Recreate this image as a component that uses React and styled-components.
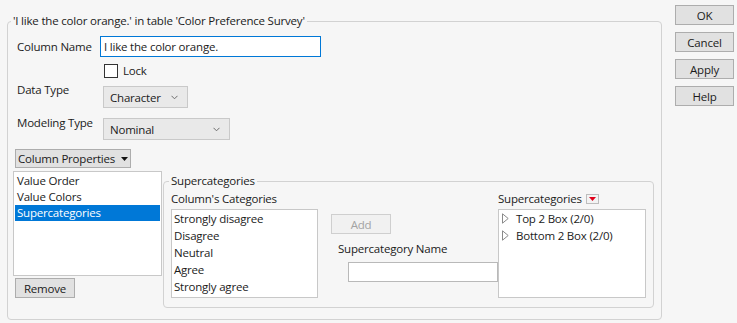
import React from "react";
import styled, { createGlobalStyle } from "styled-components";

const GlobalStyle = createGlobalStyle`
  html, body { margin: 0; padding: 0; background: #f6f6f6; }
  body {
    font-family: "Open Sans", "Noto Sans", "Liberation Sans", sans-serif;
    font-size: 11.5px;
    letter-spacing: -0.2px;
    color: #1b1b1b;
  }
  * { box-sizing: border-box; }
`;

const Window = styled.div`
  display: flex;
  align-items: flex-start;
  width: 737px;
  height: 323px;
  padding: 5px 0 0 7px;
  gap: 13px;
`;

const Group = styled.fieldset`
  margin: ${(p) => p.$top || 0}px 0 0 ${(p) => p.$left || 0}px;
  padding: ${(p) => p.$pad};
  width: ${(p) => p.$w}px;
  height: ${(p) => p.$h}px;
  border: 1px solid #d2d2d2;
  border-radius: 4px;
  min-width: 0;
`;

const Legend = styled.legend`
  margin-left: -2px;
  padding: 0 2px;
  line-height: 16px;
  height: 16px;
  white-space: nowrap;
`;

const Row = styled.div`
  display: flex;
  align-items: ${(p) => p.$align || "center"};
  margin-top: ${(p) => p.$mt || 0}px;
`;

const Label = styled.div`
  width: ${(p) => p.$w || 87}px;
  padding-left: 4px;
  line-height: 16px;
  white-space: nowrap;
  margin-top: ${(p) => p.$mt || 0}px;
`;

const TextInput = styled.div`
  width: ${(p) => p.$w}px;
  height: ${(p) => p.$h}px;
  margin-left: ${(p) => p.$ml || 0}px;
  margin-top: ${(p) => p.$mt || 0}px;
  background: #fff;
  border: 1px solid ${(p) => (p.$focus ? "#0078d7" : "#b9b9b9")};
  padding: 0 3px;
  display: flex;
  align-items: center;
  white-space: nowrap;
`;

const CheckBox = styled.span`
  width: 14px;
  height: 14px;
  margin-left: 91px;
  border: 1px solid #333;
  background: #fff;
`;

const CheckText = styled.span`
  margin-left: 5px;
  line-height: 16px;
`;

const Select = styled.div`
  width: ${(p) => p.$w}px;
  height: 22px;
  margin-left: 3px;
  background: #e9e9e9;
  border: 1px solid #c9c9c9;
  display: flex;
  align-items: center;
  justify-content: space-between;
  padding: 0 9px 0 6px;
`;

const Button = styled.div`
  width: ${(p) => p.$w}px;
  height: ${(p) => p.$h || 20}px;
  margin-left: ${(p) => p.$ml || 0}px;
  margin-top: ${(p) => p.$mt || 0}px;
  background: ${(p) => (p.$disabled ? "#f1f1f1" : "#e1e1e1")};
  border: 1px solid ${(p) => (p.$disabled ? "#cfcfcf" : "#adadad")};
  color: ${(p) => (p.$disabled ? "#a3a3a3" : "#1b1b1b")};
  display: flex;
  align-items: center;
  justify-content: ${(p) => (p.$menu ? "flex-start" : "center")};
  gap: 6px;
  padding-left: ${(p) => (p.$menu ? 2 : 0)}px;
  white-space: nowrap;
`;

const ButtonColumn = styled.div`
  display: flex;
  flex-direction: column;
  gap: 7px;
`;

const Bottom = styled.div`
  display: flex;
  align-items: flex-start;
  margin-top: 3px;
`;

const LeftCol = styled.div`
  display: flex;
  flex-direction: column;
`;

const ListBox = styled.div`
  width: ${(p) => p.$w}px;
  height: ${(p) => p.$h}px;
  margin-top: ${(p) => p.$mt || 0}px;
  background: #fff;
  border: 1px solid #c8c8c8;
  padding: ${(p) => p.$pad || "0"};
  display: flex;
  flex-direction: column;
`;

const ListItem = styled.div`
  height: ${(p) => p.$h}px;
  line-height: ${(p) => p.$h}px;
  padding-left: 2px;
  white-space: nowrap;
  background: ${(p) => (p.$sel ? "#0078d7" : "transparent")};
  color: ${(p) => (p.$sel ? "#fff" : "inherit")};
`;

const TreeItem = styled.div`
  height: 17px;
  display: flex;
  align-items: center;
  padding-left: 3px;
  gap: 7px;
  white-space: nowrap;
`;

const SubCols = styled.div`
  display: flex;
  align-items: flex-start;
  padding-top: 2px;
`;

const Col = styled.div`
  display: flex;
  flex-direction: column;
  width: ${(p) => p.$w}px;
`;

const ColLabel = styled.div`
  display: flex;
  align-items: center;
  line-height: 16px;
  height: 16px;
  white-space: nowrap;
  margin-left: ${(p) => p.$ml || 0}px;
  margin-top: ${(p) => p.$mt || 0}px;
`;

const MenuButton = styled.span`
  width: 13px;
  height: 10px;
  margin-left: 4px;
  background: #f3f3f3;
  border: 1px solid #bdbdbd;
  display: flex;
  align-items: center;
  justify-content: center;
`;

const Chevron = () => (
  <svg width="7" height="5" viewBox="0 0 7 5">
    <path d="M0.5 0.8 L3.5 3.8 L6.5 0.8" fill="none" stroke="#6d6d6d" strokeWidth="1" />
  </svg>
);

const Caret = ({ color }) => (
  <svg width="7" height="4" viewBox="0 0 7 4">
    <path d="M0 0 H7 L3.5 4 Z" fill={color} />
  </svg>
);

const TreeArrow = () => (
  <svg width="7" height="11" viewBox="0 0 7 11">
    <path d="M0.5 0.8 L6.2 5.5 L0.5 10.2 Z" fill="#fff" stroke="#8a8a8a" strokeWidth="1" />
  </svg>
);

const categories = ["Strongly disagree", "Disagree", "Neutral", "Agree", "Strongly agree"];
const properties = ["Value Order", "Value Colors", "Supercategories"];
const supers = ["Top 2 Box (2/0)", "Bottom 2 Box (2/0)"];

export default function App() {
  return (
    <>
      <GlobalStyle />
      <Window>
        <Group $top={8} $w={655} $h={307} $pad="7px 7px 0 5px">
          <Legend>'I like the color orange.' in table 'Color Preference Survey'</Legend>
          <Row>
            <Label>Column Name</Label>
            <TextInput $focus $w={221} $h={21}>I like the color orange.</TextInput>
          </Row>
          <Row $mt={6}>
            <CheckBox />
            <CheckText>Lock</CheckText>
          </Row>
          <Row $mt={7} $align="flex-start">
            <Label $w={87} $mt={-4}>Data Type</Label>
            <Select $w={85}>
              <span>Character</span>
              <Chevron />
            </Select>
          </Row>
          <Row $mt={10} $align="flex-start">
            <Label $w={87} $mt={-3}>Modeling Type</Label>
            <Select $w={127}>
              <span>Nominal</span>
              <Chevron />
            </Select>
          </Row>
          <Button $w={116} $h={19} $ml={2} $mt={9} $menu>
            <span>Column Properties</span>
            <Caret color="#111" />
          </Button>
          <Bottom>
            <LeftCol>
              <ListBox $w={149} $h={105} $pad="1px">
                {properties.map((p, i) => (
                  <ListItem key={p} $h={16} $sel={i === 2}>{p}</ListItem>
                ))}
              </ListBox>
              <Button $w={60} $ml={2} $mt={2}>Remove</Button>
            </LeftCol>
            <Group $top={2} $left={1} $w={491} $h={135} $pad="0 7px 0 7px">
              <Legend>Supercategories</Legend>
              <SubCols>
                <Col $w={147}>
                  <ColLabel>Column's Categories</ColLabel>
                  <ListBox $w={147} $h={89} $mt={2}>
                    {categories.map((c) => (
                      <ListItem key={c} $h={17}>{c}</ListItem>
                    ))}
                  </ListBox>
                </Col>
                <Col $w={180}>
                  <Button $w={60} $ml={13} $mt={23} $disabled>Add</Button>
                  <ColLabel $ml={20} $mt={7}>Supercategory Name</ColLabel>
                  <TextInput $w={150} $h={20} $ml={30} $mt={5} />
                </Col>
                <Col $w={148}>
                  <ColLabel>
                    Supercategories
                    <MenuButton>
                      <Caret color="#e0001a" />
                    </MenuButton>
                  </ColLabel>
                  <ListBox $w={148} $h={89} $mt={2}>
                    {supers.map((s) => (
                      <TreeItem key={s}>
                        <TreeArrow />
                        <span>{s}</span>
                      </TreeItem>
                    ))}
                  </ListBox>
                </Col>
              </SubCols>
            </Group>
          </Bottom>
        </Group>
        <ButtonColumn>
          <Button $w={59}>OK</Button>
          <Button $w={59}>Cancel</Button>
          <Button $w={59}>Apply</Button>
          <Button $w={59}>Help</Button>
        </ButtonColumn>
      </Window>
    </>
  );
}
